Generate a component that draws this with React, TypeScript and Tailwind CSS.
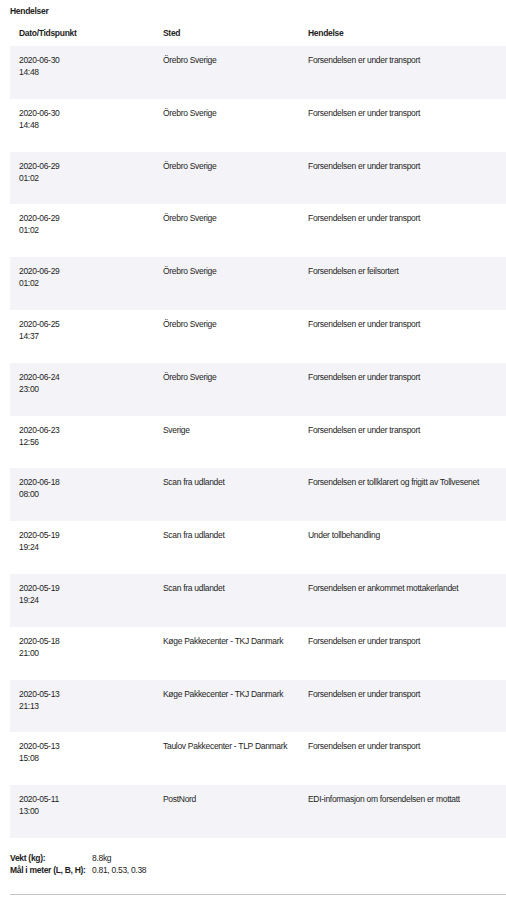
import React from 'react';

const events = [
  { date: '2020-06-30', time: '14:48', place: 'Örebro Sverige', event: 'Forsendelsen er under transport' },
  { date: '2020-06-30', time: '14:48', place: 'Örebro Sverige', event: 'Forsendelsen er under transport' },
  { date: '2020-06-29', time: '01:02', place: 'Örebro Sverige', event: 'Forsendelsen er under transport' },
  { date: '2020-06-29', time: '01:02', place: 'Örebro Sverige', event: 'Forsendelsen er under transport' },
  { date: '2020-06-29', time: '01:02', place: 'Örebro Sverige', event: 'Forsendelsen er feilsortert' },
  { date: '2020-06-25', time: '14:37', place: 'Örebro Sverige', event: 'Forsendelsen er under transport' },
  { date: '2020-06-24', time: '23:00', place: 'Örebro Sverige', event: 'Forsendelsen er under transport' },
  { date: '2020-06-23', time: '12:56', place: 'Sverige', event: 'Forsendelsen er under transport' },
  { date: '2020-06-18', time: '08:00', place: 'Scan fra udlandet', event: 'Forsendelsen er tollklarert og frigitt av Tollvesenet' },
  { date: '2020-05-19', time: '19:24', place: 'Scan fra udlandet', event: 'Under tollbehandling' },
  { date: '2020-05-19', time: '19:24', place: 'Scan fra udlandet', event: 'Forsendelsen er ankommet mottakerlandet' },
  { date: '2020-05-18', time: '21:00', place: 'Køge Pakkecenter - TKJ Danmark', event: 'Forsendelsen er under transport' },
  { date: '2020-05-13', time: '21:13', place: 'Køge Pakkecenter - TKJ Danmark', event: 'Forsendelsen er under transport' },
  { date: '2020-05-13', time: '15:08', place: 'Taulov Pakkecenter - TLP Danmark', event: 'Forsendelsen er under transport' },
  { date: '2020-05-11', time: '13:00', place: 'PostNord', event: 'EDI-informasjon om forsendelsen er mottatt' },
];

export default function App() {
  return (
    <div className="min-h-screen bg-white pl-[10px] pt-[5px] font-['Liberation_Sans',Arial,sans-serif] text-[8.5px] leading-[12px] tracking-[-0.3px] text-[#1d1d22]">
      <h3 className="h-[12px] font-bold">Hendelser</h3>

      <table className="mt-[2px] w-[496px] table-fixed border-collapse">
        <colgroup>
          <col className="w-[144px]" />
          <col className="w-[145px]" />
          <col />
        </colgroup>
        <thead>
          <tr className="h-[27px]">
            <th className="pl-[9px] text-left align-middle font-bold">Dato/Tidspunkt</th>
            <th className="pl-[9px] text-left align-middle font-bold">Sted</th>
            <th className="pl-[9px] text-left align-middle font-bold">Hendelse</th>
          </tr>
        </thead>
        <tbody>
          {events.map((e, i) => (
            <tr key={i} className={i % 2 === 0 ? 'h-[52.8px] bg-[#f4f4f8]' : 'h-[52.8px] bg-white'}>
              <td className="pl-[9px] pt-[8px] align-top">
                <div>{e.date}</div>
                <div>{e.time}</div>
              </td>
              <td className="pl-[9px] pt-[8px] align-top">{e.place}</td>
              <td className="pl-[9px] pt-[8px] align-top">{e.event}</td>
            </tr>
          ))}
        </tbody>
      </table>

      <dl className="mt-[14px] grid grid-cols-[82px_1fr]">
        <dt className="font-bold">Vekt (kg):</dt>
        <dd>8.8kg</dd>
        <dt className="font-bold">Mål i meter (L, B, H):</dt>
        <dd>0.81, 0.53, 0.38</dd>
      </dl>

      <hr className="mt-[18px] border-t border-[#c4c4c4]" />
    </div>
  );
}
